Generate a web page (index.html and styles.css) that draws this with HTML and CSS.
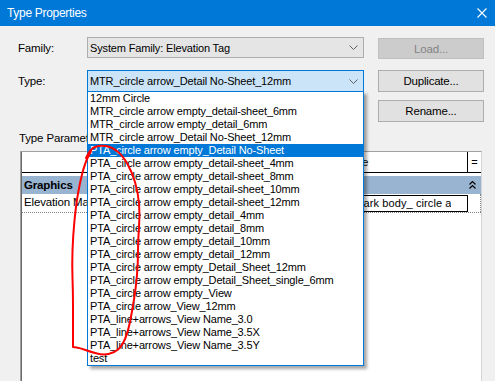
FILE: index.html
```html
<!DOCTYPE html>
<html>

<head>
  <title>Type Properties</title>
  <link rel="stylesheet" href="styles.css">
</head>

<body>
  <div class="titlebar">
    <span class="title">Type Properties</span>
    <svg class="close" width="10" height="10" viewBox="0 0 10 10">
      <path d="M0.5 0.5 L9.5 9.5 M9.5 0.5 L0.5 9.5" stroke="#fff" stroke-width="1.1" fill="none"/>
    </svg>
  </div>

  <div class="form">
    <div class="row first">
      <label>Family:</label>
      <div class="combo disabled">
        <span class="combo-text">System Family: Elevation Tag</span>
        <svg class="arrow" width="9" height="5" viewBox="0 0 9 5"><path d="M0.5 0.5 L4.5 4.5 L8.5 0.5" stroke="#606060" fill="none"/></svg>
      </div>
      <button type="button" class="btn" disabled>Load...</button>
    </div>

    <div class="row second">
      <label>Type:</label>
      <div class="combo open">
        <span class="combo-text">MTR_circle arrow_Detail No-Sheet_12mm</span>
        <svg class="arrow" width="9" height="5" viewBox="0 0 9 5"><path d="M0.5 0.5 L4.5 4.5 L8.5 0.5" stroke="#606060" fill="none"/></svg>
        <ul class="dropdown">
          <li>12mm Circle</li>
          <li>MTR_circle arrow empty_detail-sheet_6mm</li>
          <li>MTR_circle arrow empty_detail_6mm</li>
          <li>MTR_circle arrow_Detail No-Sheet_12mm</li>
          <li class="selected">PTA_circle arrow empty_Detail No-Sheet</li>
          <li>PTA_circle arrow empty_detail-sheet_4mm</li>
          <li>PTA_circle arrow empty_detail-sheet_8mm</li>
          <li>PTA_circle arrow empty_detail-sheet_10mm</li>
          <li>PTA_circle arrow empty_detail-sheet_12mm</li>
          <li>PTA_circle arrow empty_detail_4mm</li>
          <li>PTA_circle arrow empty_detail_8mm</li>
          <li>PTA_circle arrow empty_detail_10mm</li>
          <li>PTA_circle arrow empty_detail_12mm</li>
          <li>PTA_circle arrow empty_Detail_Sheet_12mm</li>
          <li>PTA_circle arrow empty_Detail_Sheet_single_6mm</li>
          <li>PTA_circle arrow empty_View</li>
          <li>PTA_circle arrow_View_12mm</li>
          <li>PTA_line+arrows_View Name_3.0</li>
          <li>PTA_line+arrows_View Name_3.5X</li>
          <li>PTA_line+arrows_View Name_3.5Y</li>
          <li>test</li>
        </ul>
      </div>
      <button type="button" class="btn">Duplicate...</button>
    </div>

    <div class="row">
      <span></span>
      <span></span>
      <button type="button" class="btn">Rename...</button>
    </div>

    <div class="section-label">Type Parameters</div>

    <div class="grid">
      <div class="grid-head">
        <div class="col-name">Parameter</div>
        <div class="col-value">Value</div>
        <div class="col-eq">=</div>
      </div>
      <div class="group">
        <span>Graphics</span>
        <svg class="collapse" width="7" height="8" viewBox="0 0 7 8">
          <path d="M0.5 3.5 L3.5 0.5 L6.5 3.5 M0.5 7.5 L3.5 4.5 L6.5 7.5" stroke="#000" stroke-width="1.2" fill="none"/>
        </svg>
      </div>
      <div class="prop">
        <div class="col-name">Elevation Mark</div>
        <div class="col-value">
          <div class="value-box"><span>Elevation Mark body_ circle arrow</span></div>
        </div>
        <div class="col-eq"></div>
      </div>
    </div>
  </div>

  <svg class="markup" width="495" height="381" viewBox="0 0 495 381">
    <path d="M86,158 Q90,149 95,147 Q100,145 106,146 Q112,147 117.5,151.5 Q123,156 127.5,164 Q132,172 135,182 Q138,192 139,203.5 Q140,215 139,227.5 Q138,240 138,251.5 Q138,263 137,275 Q136,287 134,299.5 Q132,312 130,322 Q128,332 125,339 Q122,346 118,349.5 Q114,353 108.5,354 Q103,355 97,353.5 Q91,352 85.5,350 Q80,348 76.5,347.5 L73,347 Q73,320 73,306 Q73,292 72.5,278.5 Q72,265 72.5,250.5 Q73,236 74.5,220.5 Q76,205 78,193.5 Q80,182 82.5,172.5 Q85,163 88,157 L91,151" stroke="#f00" stroke-width="2" fill="none" stroke-linejoin="round" stroke-linecap="round"/>
  </svg>
</body>

</html>
```

FILE: styles.css
```css
body {
  font-family: "Liberation Sans", Arial, sans-serif;
  font-size: 11px;
  letter-spacing: -0.15px;
  background-color: #f0f0f0;
  color: #000;
  margin: 0;
  padding: 0;
  width: 495px;
  height: 381px;
  overflow: hidden;
  position: relative;
}

.titlebar {
  display: flex;
  align-items: center;
  height: 26px;
  background-color: #0078d7;
  color: #fff;
  padding-left: 7px;
}

.title {
  font-size: 12px;
  letter-spacing: -0.3px;
}

.close {
  margin-left: auto;
  margin-right: 8px;
}

.form {
  padding: 11px 11px 0 18px;
}

.row {
  display: grid;
  grid-template-columns: 69px 277px 1fr;
  height: 22px;
  margin-bottom: 9px;
  align-items: center;
}

.row.first {
  margin-bottom: 11px;
}

.row.second {
  margin-bottom: 8px;
}

label {
  font-size: 11.5px;
}

.combo {
  position: relative;
  display: flex;
  align-items: center;
  height: 22px;
  box-sizing: border-box;
  border: 1px solid #adadad;
  background-color: #e5e5e5;
  padding-left: 2px;
}

.combo.disabled {
  height: 21px;
  align-self: start;
}

.combo.open {
  border-color: #0078d7;
  background-color: #cce4f7;
}

.combo .arrow {
  margin-left: auto;
  margin-right: 5px;
}

.dropdown {
  position: absolute;
  top: 20px;
  left: -1px;
  right: -1px;
  margin: 0;
  padding: 0;
  list-style: none;
  background-color: #fff;
  border: 1px solid #0078d7;
  box-shadow: 3px 3px 3px rgba(0, 0, 0, 0.35);
  z-index: 2;
}

.dropdown li {
  height: 13px;
  line-height: 13px;
  padding-left: 2px;
  white-space: nowrap;
}

.dropdown li.selected {
  background-color: #0078d7;
  color: #fff;
}

.btn {
  justify-self: end;
  width: 106px;
  height: 22px;
  font-family: "Liberation Sans", Arial, sans-serif;
  font-size: 11.5px;
  letter-spacing: -0.2px;
  background-color: #e1e1e1;
  border: 1px solid #adadad;
  color: #000;
  padding: 0;
}

.btn:disabled {
  background-color: #cccccc;
  border-color: #bfbfbf;
  color: #838383;
  height: 21px;
  margin-top: 1px;
}

.section-label {
  font-size: 11.5px;
  line-height: 12px;
  margin-top: 10px;
  margin-left: 1px;
}

.grid {
  margin: 7px 2px 0 2px;
  height: 240px;
  background-color: #fff;
  border-top: 1px solid #a0a0a0;
  border-left: 1px solid #a0a0a0;
  border-right: 1px solid #d4d4d4;
  box-shadow: inset 1px 0 #696969;
}

.grid-head {
  display: flex;
  height: 20px;
  border-bottom: 1px solid #000;
  margin-bottom: 3px;
  margin-left: 1px;
  line-height: 20px;
}

.col-name {
  flex: 0 0 221px;
  padding-left: 2px;
  box-sizing: border-box;
  overflow: hidden;
  white-space: nowrap;
}

.grid-head .col-name,
.grid-head .col-value {
  text-align: center;
}

.col-value {
  flex: 1;
  min-width: 0;
}

.col-eq {
  flex: 0 0 12px;
  text-align: center;
}

.grid-head .col-eq {
  flex-basis: 13px;
  border-left: 1px solid #000;
}

.group {
  display: flex;
  align-items: center;
  height: 18px;
  margin-left: 1px;
  padding-left: 2px;
  background-color: #99b4d1;
  font-weight: bold;
  font-size: 11.5px;
}

.group .collapse {
  margin-left: auto;
  margin-right: 5px;
}

.prop {
  display: flex;
  height: 18px;
  margin-left: 1px;
  border-bottom: 1px dotted #808080;
  line-height: 17px;
}

.prop .col-name {
  font-size: 11.5px;
}

.value-box {
  margin-top: 1px;
  height: 17px;
  box-sizing: border-box;
  border: 1px solid #000;
  padding-left: 61px;
  font-size: 11px;
  letter-spacing: 0.1px;
  line-height: 15px;
}

.value-box span {
  display: block;
  margin-right: 16px;
  white-space: nowrap;
  overflow: hidden;
}

.prop .col-eq {
  border-right: 1px dotted #808080;
}

.markup {
  position: absolute;
  top: 0;
  left: 0;
  pointer-events: none;
  z-index: 5;
}
```
